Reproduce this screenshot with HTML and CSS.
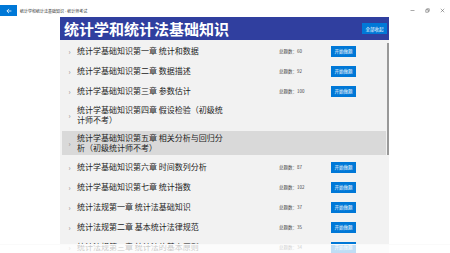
FILE: index.html
```html
<!DOCTYPE html>
<html>
<head>
    <title>统计学和统计法基础知识 - 统计师考试</title>
    <link rel="stylesheet" href="styles.css">
</head>
<body>
    <div class="titlebar">
        <button class="back">
            <svg width="6" height="6" viewBox="0 0 10 10"><path d="M9 5H1.5M5 1.5L1.5 5L5 8.5" fill="none" stroke="#fff" stroke-width="1.3"/></svg>
        </button>
        <span class="wintitle">统计学和统计法基础知识 - 统计师考试</span>
        <div class="winctl">
            <svg width="5" height="5" viewBox="0 0 10 10"><path d="M1 5H9" stroke="#555" stroke-width="1"/></svg>
            <svg width="5" height="5" viewBox="0 0 10 10"><path d="M1.5 3.5H6.5V8.5H1.5Z M3.5 3.5V1.5H8.5V6.5H6.5" fill="none" stroke="#555" stroke-width="1"/></svg>
            <svg width="5" height="5" viewBox="0 0 10 10"><path d="M1.5 1.5L8.5 8.5M8.5 1.5L1.5 8.5" stroke="#555" stroke-width="1"/></svg>
        </div>
    </div>

    <div class="main">
        <div class="side"></div>
        <div class="panel">
            <div class="header">
                <h1>统计学和统计法基础知识</h1>
                <button class="collapse">全部收起</button>
            </div>
            <div class="list">
                <div class="row">
                    <span class="chev">›</span>
                    <span class="name">统计学基础知识第一章 统计和数据</span>
                    <span class="count">总题数：60</span>
                    <button class="start">开始做题</button>
                </div>
                <div class="row">
                    <span class="chev">›</span>
                    <span class="name">统计学基础知识第二章 数据描述</span>
                    <span class="count">总题数：92</span>
                    <button class="start">开始做题</button>
                </div>
                <div class="row">
                    <span class="chev">›</span>
                    <span class="name">统计学基础知识第三章 参数估计</span>
                    <span class="count">总题数：100</span>
                    <button class="start">开始做题</button>
                </div>
                <div class="row">
                    <span class="chev">›</span>
                    <span class="name">统计学基础知识第四章 假设检验（初级统计师不考）</span>
                </div>
                <div class="row selected">
                    <span class="chev">›</span>
                    <span class="name">统计学基础知识第五章 相关分析与回归分析（初级统计师不考）</span>
                </div>
                <div class="row">
                    <span class="chev">›</span>
                    <span class="name">统计学基础知识第六章 时间数列分析</span>
                    <span class="count">总题数：87</span>
                    <button class="start">开始做题</button>
                </div>
                <div class="row">
                    <span class="chev">›</span>
                    <span class="name">统计学基础知识第七章 统计指数</span>
                    <span class="count">总题数：102</span>
                    <button class="start">开始做题</button>
                </div>
                <div class="row">
                    <span class="chev">›</span>
                    <span class="name">统计法规第一章 统计法基础知识</span>
                    <span class="count">总题数：37</span>
                    <button class="start">开始做题</button>
                </div>
                <div class="row">
                    <span class="chev">›</span>
                    <span class="name">统计法规第二章 基本统计法律规范</span>
                    <span class="count">总题数：35</span>
                    <button class="start">开始做题</button>
                </div>
                <div class="row">
                    <span class="chev">›</span>
                    <span class="name">统计法规第三章 统计法的基本原则</span>
                    <span class="count">总题数：34</span>
                    <button class="start">开始做题</button>
                </div>
                <div class="scrollbar"></div>
            </div>
        </div>
    </div>

    <div class="fade"></div>
</body>
</html>
```

FILE: styles.css
```css
body {
    margin: 0;
    width: 450px;
    height: 253px;
    overflow: hidden;
    background: #fff;
    font-family: "Noto Sans CJK SC", "Noto Sans", sans-serif;
    color: #222;
}
button {
    font-family: inherit;
    border: none;
    padding: 0;
    cursor: pointer;
}
.titlebar {
    height: 17px;
    display: flex;
    align-items: flex-start;
}
.back {
    margin-top: 5px;
    width: 17px;
    height: 11px;
    background-color: #0078d7;
    display: flex;
    align-items: center;
    justify-content: center;
}
.wintitle {
    margin-left: 3px;
    margin-top: 8px;
    font-size: 4px;
    line-height: 6px;
    color: #333;
    white-space: nowrap;
}
.winctl {
    margin-left: auto;
    margin-top: 8px;
    display: flex;
    gap: 10px;
    padding-right: 5px;
}
.winctl svg {
    display: block;
}
.main {
    display: flex;
}
.side {
    width: 60px;
    flex: none;
}
.panel {
    width: 329px;
    flex: none;
}
.header {
    height: 23px;
    background-color: #303f9f;
    display: flex;
    align-items: center;
}
.header h1 {
    margin: 0 0 0 4px;
    font-size: 15px;
    line-height: 23px;
    font-weight: bold;
    color: #fff;
    white-space: nowrap;
}
.collapse {
    margin-left: auto;
    margin-right: 2px;
    width: 25px;
    height: 11px;
    background-color: #0078d7;
    color: #fff;
    font-size: 4.5px;
}
.list {
    position: relative;
    background-color: #f2f2f2;
    height: 220px;
    padding-top: 1px;
    display: flex;
    flex-direction: column;
}
.row {
    display: flex;
    align-items: center;
    margin: 2px 3px 2px 2px;
    padding: 2px 0;
    min-height: 12px;
    flex: none;
}
.row.selected {
    background-color: #d9d9d9;
}
.chev {
    width: 15px;
    flex: none;
    text-align: center;
    font-size: 7px;
    line-height: 10px;
    color: #888;
}
.name {
    width: 148px;
    flex: none;
    font-size: 8px;
    line-height: 10px;
    color: #222;
}
.count {
    margin-left: 54px;
    width: 52px;
    flex: none;
    font-size: 4.5px;
    color: #444;
}
.start {
    width: 25px;
    height: 11px;
    background-color: #0078d7;
    color: #fff;
    font-size: 4.5px;
}
.scrollbar {
    position: absolute;
    left: 327px;
    top: 3px;
    width: 2px;
    height: 112px;
    background-color: #999;
}
.fade {
    position: fixed;
    left: 0;
    right: 0;
    top: 244px;
    bottom: 0;
    border-top: 1px solid #fafafa;
    background: rgba(255, 255, 255, 0.75);
}
```
